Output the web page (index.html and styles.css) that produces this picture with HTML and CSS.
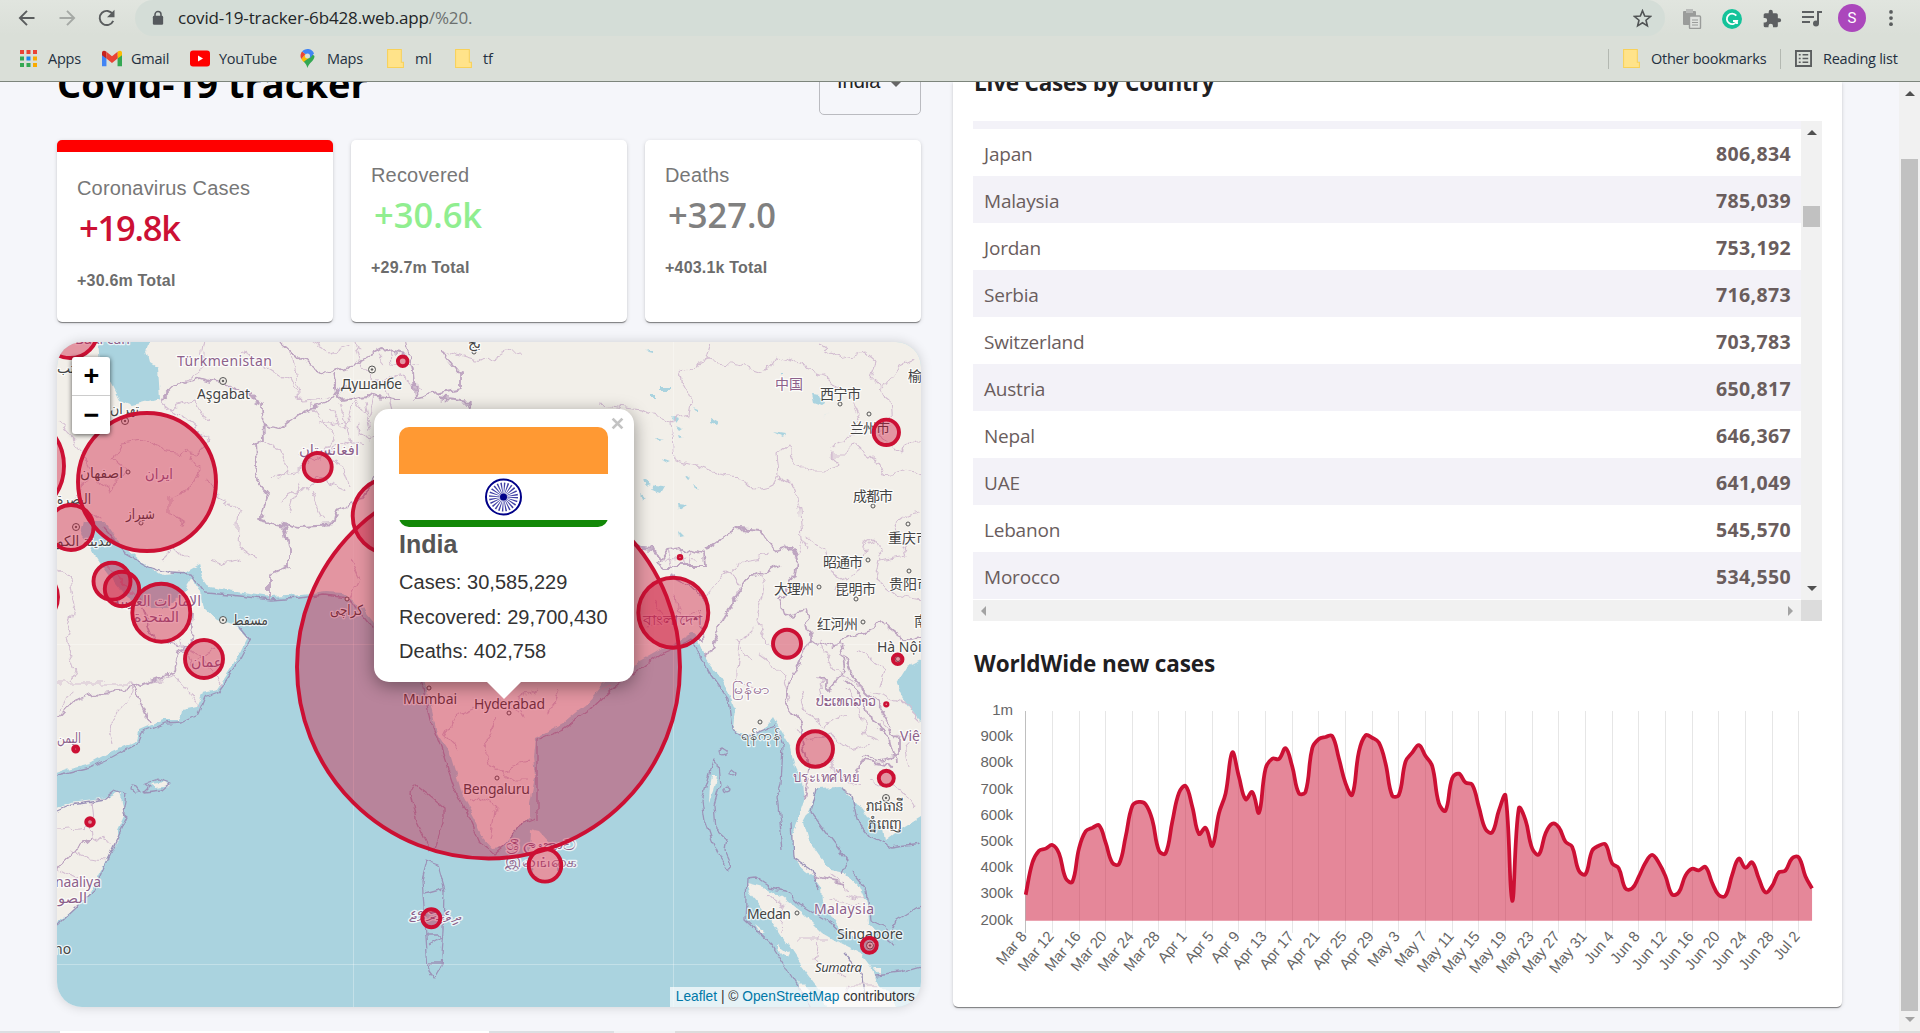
FILE: index.html
```html
<!DOCTYPE html>
<html lang="en">
<head>
<meta charset="utf-8">
<title>Covid-19 tracker</title>
<link rel="stylesheet" href="styles.css">
</head>
<body>
<header class="chrome">
  <div class="toolbar">
    <svg class="nav-icon" viewBox="0 0 24 24"><path d="M21 12H4M12 3.500 3.500 12 12 20.500"/></svg>
    <svg class="nav-icon nav-off" viewBox="0 0 24 24"><path d="M3 12h17M12 3.500 20.500 12 12 20.500"/></svg>
    <svg class="nav-icon" viewBox="0 0 24 24"><path d="M19.500 15.500A8.500 8.500 0 1 1 19 7.500"/><path class="solid" d="M21 2v9h-9z"/></svg>
    <div class="omnibox">
      <svg class="lock" viewBox="0 0 14 18"><path d="M3.500 8V5a3.500 3.500 0 0 1 7 0v3" fill="none" stroke="#55595d" stroke-width="1.800"/><rect x="1" y="6.500" width="12" height="10.500" rx="1.500" fill="#55595d"/></svg>
      <span class="url">covid-19-tracker-6b428.web.app<span class="url-path">/%20.</span></span>
      <svg class="star" viewBox="0 0 20 20"><path d="m10 1.800 2.300 5.600 6 .5-4.600 3.900 1.400 5.900-5.100-3.200-5.100 3.200 1.400-5.900L1.700 7.900l6-.5z"/></svg>
    </div>
    <div class="extensions">
      <svg viewBox="0 0 20 20"><rect x="1" y="2" width="13" height="14" rx="1" fill="#9a9c9a"/><rect x="4" y="0" width="7" height="4" fill="#b9bbb9"/><rect x="7.500" y="7" width="11" height="12.500" rx="1" fill="#dfe2de" stroke="#9a9c9a" stroke-width="1.400"/><path d="M10 11h6M10 13.500h6M10 16h6" stroke="#9a9c9a" stroke-width="1.200"/></svg>
      <svg viewBox="0 0 20 20"><circle cx="10" cy="10" r="10" fill="#15c39a"/><path d="M14.300 6.600A5.300 5.300 0 1 0 15 12h-4M15 12v3" fill="none" stroke="#fff" stroke-width="1.800"/></svg>
      <svg viewBox="0 0 24 24"><path fill="#5d6062" d="M20.500 11H19V7a2 2 0 0 0-2-2h-4V3.500a2.500 2.500 0 0 0-5 0V5H4a2 2 0 0 0-2 2v3.800h1.500a2.700 2.700 0 0 1 0 5.400H2V20a2 2 0 0 0 2 2h3.800v-1.500a2.700 2.700 0 0 1 5.400 0V22H17a2 2 0 0 0 2-2v-4h1.500a2.500 2.500 0 0 0 0-5z"/></svg>
      <svg viewBox="0 0 20 20"><path d="M0 3h12M0 8h12M0 13h8" stroke="#5d6062" stroke-width="2"/><path d="M16 14V3h4" fill="none" stroke="#5d6062" stroke-width="2"/><circle cx="14" cy="14.500" r="3" fill="#5d6062"/></svg>
    </div>
    <span class="avatar">S</span>
    <svg class="dots" viewBox="0 0 4 18"><circle cx="2" cy="2" r="2"/><circle cx="2" cy="8.500" r="2"/><circle cx="2" cy="15" r="2"/></svg>
  </div>
  <nav class="bookmarks">
    <a class="bm bm-apps"><svg viewBox="0 0 17 17"><path fill="#ea4335" d="M0 0h4v4H0zM6.500 0h4v4h-4zM13 0h4v4h-4z"/><path fill="#34a853" d="M0 6.500h4v4H0zM0 13h4v4H0zM6.500 13h4v4h-4z"/><path fill="#1a86f0" d="M6.500 6.500h4v4h-4z"/><path fill="#f9ab00" d="M13 6.500h4v4h-4zM13 13h4v4h-4z"/></svg>Apps</a>
    <a class="bm bm-gmail"><svg class="wide" viewBox="0 0 18 14"><path fill="#4285f4" d="M0 2v12h4V5z"/><path fill="#34a853" d="M14 5v9h4V2z"/><path fill="#fbbc04" d="M14 1v6l4-3V2c0-2-2-2.500-4-1z"/><path fill="#c5221f" d="M4 1v6L0 4V2c0-2 2-2.500 4-1z"/><path fill="#ea4335" d="m4 1 5 4 5-4v6l-5 4-5-4z"/></svg>Gmail</a>
    <a class="bm bm-yt"><svg class="wide" viewBox="0 0 20 16"><rect width="20" height="16" rx="3" fill="#f00"/><path fill="#fff" d="m8 5 5 3-5 3z"/></svg>YouTube</a>
    <a class="bm bm-maps"><svg viewBox="0 0 14 19"><path fill="#34a853" d="M7 19c1-5 7-7 7-12L10 4 3 12c1 2 3 3 4 7z"/><path fill="#fbbc04" d="M.8 10 5 5l4.500 3L3 13z"/><path fill="#ea4335" d="M0 7c0-2 .8-3.500 1.600-4.500L5 5 .8 10A7 7 0 0 1 0 7z"/><path fill="#4285f4" d="M1.600 2.500A7 7 0 0 1 13.500 4.500L9.500 9 5 5z"/><circle cx="7" cy="7" r="2.500" fill="#dadfd8"/></svg>Maps</a>
    <a class="bm bm-dir"><svg viewBox="0 0 16 18"><path fill="#ffe38a" stroke="#f8d159" d="M.5.5h13v12h2v5H.5z"/></svg>ml</a>
    <a class="bm"><svg viewBox="0 0 16 18"><path fill="#ffe38a" stroke="#f8d159" d="M.5.5h13v12h2v5H.5z"/></svg>tf</a>
    <span class="rule"></span>
    <a class="bm bm-other"><svg viewBox="0 0 16 18"><path fill="#ffe38a" stroke="#f8d159" d="M.5.5h13v12h2v5H.5z"/></svg>Other bookmarks</a>
    <span class="rule"></span>
    <a class="bm bm-reading"><svg viewBox="0 0 18 18"><path fill="none" stroke="#5b5e5f" stroke-width="2" d="M1 1h16v16H1z"/><path stroke="#5b5e5f" stroke-width="1.500" d="M4 5h2M8 5h6M4 9h2M8 9h6M4 13h2M8 13h6"/></svg>Reading list</a>
  </nav>
</header>

<main class="viewport">
  <div class="app">
    <section class="left">
      <div class="app-header">
        <h1>Covid-19 tracker</h1>
        <div class="select">India<span class="caret"></span></div>
      </div>
      <div class="stats">
        <article class="stat stat-active">
          <h2>Coronavirus Cases</h2><p class="new red">+19.8k</p><p class="total">+30.6m Total</p>
        </article>
        <article class="stat">
          <h2>Recovered</h2><p class="new green">+30.6k</p><p class="total">+29.7m Total</p>
        </article>
        <article class="stat">
          <h2>Deaths</h2><p class="new grey">+327.0</p><p class="total">+403.1k Total</p>
        </article>
      </div>
      <div class="map">
        <svg class="tiles" viewBox="57 342 864 665">
          <defs>
            <filter id="rough" x="-5%" y="-5%" width="110%" height="110%"><feTurbulence type="fractalNoise" baseFrequency=".07" numOctaves="3" seed="4"/><feDisplacementMap in="SourceGraphic" scale="13" xChannelSelector="R" yChannelSelector="G"/></filter>
            <filter id="coast" x="-5%" y="-5%" width="110%" height="110%"><feTurbulence type="fractalNoise" baseFrequency=".08" numOctaves="3" seed="9"/><feDisplacementMap in="SourceGraphic" scale="7" xChannelSelector="R" yChannelSelector="G"/></filter>
          </defs>
          <rect x="57" y="342" width="864" height="665" fill="#aad3df"/>
          <g filter="url(#coast)">
            <g class="land">
              <path d="M40 320H940V655L921 660 907 667 897 683 903 697 917 717 940 740V815L921 817 900 830 885 842 883 827 868 818 857 803 847 793 840 787 817 788 810 810 803 823 808 840 820 857 830 870 845 873 860 887 867 903 868 923 877 933 863 937 843 933 833 920 823 903 822 887 815 877 802 867 793 857 792 837 798 820 805 800 803 783 795 767 790 747 782 733 773 717 763 730 753 735 740 733 733 730 735 710 727 690 720 677 707 660 700 643 693 633 680 640 660 650 637 663 617 673 600 687 587 703 563 723 547 732 535 738 533 757 535 777 530 803 530 817 517 827 503 847 493 848 483 837 477 823 463 797 450 753 437 733 430 703 425 683 415 650 405 632 390 640 375 623 365 610 343 593 327 592 303 595 270 597 237 592 210 587 203 577 200 563 183 573 163 575 140 560 117 540 103 520 83 520 80 533 90 547 100 563 110 577 123 593 143 607 167 607 183 593 193 577 200 593 203 607 217 620 237 627 247 637 237 657 230 670 217 690 203 693 197 707 182 710 180 720 163 720 140 730 137 740 110 752 90 763 70 768 40 778z"/>
              <path d="M40 812 57 807 70 802 110 797 120 792 123 808 125 815 118 830 118 840 105 862 93 885 85 900 57 922 40 930z"/>
              <path d="M747 883 767 888 783 897 803 913 823 933 840 943 860 953 873 970 878 983 893 1000 905 1020H830L820 990 800 963 780 933 763 910 750 893z"/>
              <path d="M531 830 540 832 550 843 558 860 558 874 545 880 533 875 530 850z"/>
              <path d="M150 784 165 782 170 786 155 788zM712 775 716 775 713 792 709 802 710 785zM755 925l10 8-4 2zM778 945l10 8-2 4-8-8zM797 980l12 12 2 8-10-6zM873 967h7v8z"/>
            </g>
          </g>
          <g filter="url(#coast)" class="water">
            <path d="M97 335 100 360 110 380 120 400 133 405 160 398 158 367 150 362 147 350 153 335z"/>
            <path d="M811 394l9 1 4 9-3 2-8-3zM655 485l9 1-4 7-9-3zM677 503l9 1-8 5zM774 433l12 2-2 3zM660 387h10v2h-10zM652 395h4v3h-4zM671 415l9 3-4 5zM693 409l5 2v3zM711 417l9 5-2 3-8-3zM826 414l3-4-5 7zM679 529l6 6-5 1zM643 480l9 5-6 2zM693 483l2 6 4 2zM718 380l5 2zM779 373h4v2zM645 350h8v2zM656 438l7 2-4 1zM678 435l6 2-5 1zM675 425l7 3-3 2zM662 458l8 3-5 2zM684 475l7 3-3 2zM640 495l6 4-4 1z"/>
          </g>
          <g class="sea-lines" filter="url(#coast)">
            <path d="M103 527 125 553 148 566 170 573 191 574 206 593 240 596 270 600 300 598 325 595 348 598 370 625 392 648 410 645 422 683 430 720 440 745 455 790 468 815 480 842 495 853 508 842 520 824 535 818"/>
            <path d="M57 775 90 767 112 757 138 743 142 733 165 723 182 722 198 714 205 697 218 692 235 668 250 640 238 625"/>
            <path d="M57 810 70 804 105 799 115 791 126 795 123 812 128 816 119 835 106 862 94 890 57 925"/>
            <path d="M537 820 537 740 562 730 590 710 615 686 665 651 692 640 708 672 728 700 732 730 745 738 775 725 783 745 781 785 777 797 783 850M841 789 852 795 857 820 872 838 890 848 921 844M817 788 811 812 828 835 847 860 842 874 M791 822 793 857 812 870 820 890M852 872 867 890 870 920 885 927 888 940 895 945 M921 905 897 920 890 937"/>
            <path d="M747 878 745 920 772 945 800 990 812 1010M747 878 755 877 770 887 785 890 800 905 830 923 845 937"/>
            <path d="M714 760 708 780 702 800 705 820 712 840 720 858 728 870 732 865 725 850 727 840 716 830 714 805 720 785 718 765zM722 748a4 4 0 1 0 5 3zM732 770a3 3 0 1 0 4 3zM727 787a3 3 0 1 0 4 3z"/>
            <path d="M415 784 410 793 417 822 430 850 435 848 444 822 444 808zM427 861 422 880 425 920 428 970 434 978 441 966 444 930 445 890 438 865zM425 893 443 888M425 935h17M429 945l14-8M429 962h12"/>
            <path d="M131 785l-1 6 5 2 6-1-5-6zM146 783l12-4 12 4-8 7-18 2 6-6zM843 953 863 975 865 1000M875 975 900 972 921 966"/>
          </g>
          <g class="borders minor" filter="url(#rough)">
            <path d="M160 400 185 420 210 440 195 455 165 450 145 440 120 443 112 460 125 470 110 490 95 480M185 450 200 470 190 490 170 495 170 515 185 525M205 480 225 500 240 508 238 545 258 560M170 410 195 400 205 420M57 420 75 440 90 470 75 500 100 520M205 342 200 370 180 385M240 350 265 365 290 380 300 400 330 398M330 410 345 430 355 400 370 420 375 395M280 500 320 480 345 490M300 480 290 515M310 490 325 520"/>
            <path d="M290 350 295 375 300 400M355 342 362 365 380 385 400 375 420 390M385 385 392 410M325 420 335 440 320 460 300 455M310 340 330 352 350 345M365 400 370 430M240 560 225 565 210 560M160 560 175 545 190 560M57 570 70 580 75 605 65 640 76 670 70 682M57 684H133L130 700 107 725 112 745M133 688 175 675 197 705M183 640 190 665 215 650M175 640 200 655 225 690"/>
            <path d="M320 425 345 420 350 440 330 450M345 440 365 445M355 425 370 440M340 405 345 420M262 440 280 450 290 470 275 480M270 480 300 470 310 455M330 460 345 470 350 485M310 400 320 420M390 350 395 362 420 365M375 350 385 362"/>
            <path d="M440 350 480 362 520 350M675 420 640 410 600 405M711 342 706 360 680 372 685 390 690 400 688 415 672 420 675 460 695 465 720 475 745 480 755 490 775 485 780 475M706 360 735 365 765 375 775 358 800 365 825 375 835 385 850 390M820 345 840 358 865 352 875 360 870 380 880 390M880 390 900 365 915 358M877 390 890 400 892 425 875 430 900 455 915 440 921 440"/>
            <path d="M780 475 778 455 787 448 795 465 810 470 825 470 840 465 830 455 845 455 855 445 875 460 885 475 905 470 921 475M850 390 860 420 845 440 828 450M780 475 795 490 800 510 802 540 808 550M808 540 825 550 830 570 845 580 860 570 865 545 875 540 880 560 905 555M880 560 875 580 895 595 921 600M905 555 892 525 905 515 921 512M802 540 795 560M840 580 838 590"/>
            <path d="M705 600 725 575 745 560 770 555M725 570 740 585 730 610 720 620M760 570 765 590 757 620 770 650M755 625 740 640 735 680 755 690M760 655 780 670 790 700M735 640 750 660M800 690 808 715 825 725 845 715M845 690 860 710 865 735 880 740M820 680 825 700 840 700M860 650 885 670 880 685M820 640 835 670 865 690M795 730 810 740 830 735 850 750 870 745M870 690 900 700 921 720M880 720 905 740 910 765M835 755 830 770 860 785M870 780 900 790 915 810M830 875 850 890M845 895 862 900M830 900 860 905M770 895 785 905 780 930M820 935 815 960 845 975M800 940 830 940M845 1000 850 985 880 985"/>
            <path d="M455 715 480 705 500 700 520 710M455 715 445 735 460 750M495 720 485 740 490 765 500 770 530 762M480 795 495 810 490 840M480 795 470 800M535 690 520 700 525 720M500 770 515 780 530 780M560 690 550 715M610 685 600 690M350 560 360 580 350 600"/>
            <path d="M89 800 92 835 110 845M57 830 90 827M68 850 90 858 105 860M57 870 75 880M675 595 680 620 700 610M655 600 665 620 645 630M690 585 705 600M70 690 60 710"/>
            <path d="M667 550 672 568M680 548 685 567M692 552 690 567M660 558 700 560"/>
          </g>
          <g class="borders major" filter="url(#rough)">
            <path d="M160 400 175 385 200 378 225 385 245 395 262 403 263 440 255 445 257 480 270 495 260 520 285 525 290 550 290 565 270 575 270 600M262 425 280 430 305 410 335 400 345 385M280 342 300 360 330 375 352 365 380 350 405 355M335 375 340 400 365 395 400 400M405 342 412 370 415 400 435 395 460 390 460 375 440 350M260 520 300 527 335 525 338 510 355 505 375 480M437 398 470 402 475 425M57 720 75 700 90 695 133 688 175 672 180 655 190 640 192 610M133 688 150 725M100 560 140 600 155 640 182 645M57 870 75 850 92 835"/>
            <path d="M630 548 655 550 660 560M657 562 665 550 682 548 702 555 703 567 665 567zM703 552 720 540 740 528 760 530 775 550 790 545 797 560 795 575 780 600 785 615 805 610 810 640 820 648 840 640 865 632 885 625 905 640 921 635M780 565 745 580 735 600 725 615 715 640 705 660M700 610 703 640 695 640M670 575 690 585 705 600M840 640 845 670 830 690 820 680M810 640 790 680 785 700 800 720 805 745 810 770 805 800M845 680 865 700 870 720 890 735 895 760M860 755 880 760 900 755 900 740 875 700 855 680 845 655M815 877 830 882 845 885M855 775 862 760 890 765"/>
          </g>
          <path class="seams" d="M353.500 342V1007M673.500 342V1007M57 644.500H921M57 964.500H921"/>
          <g class="places">
            <circle cx="223" cy="381" r="3.500"/><circle cx="372" cy="369.500" r="3.500"/><circle cx="125" cy="421" r="3.500"/><circle cx="76" cy="527" r="3.500"/><circle cx="223" cy="620" r="3.500"/><circle cx="886" cy="798" r="3.500"/><circle cx="870" cy="945.500" r="3.500"/>
            <circle class="dot" cx="223" cy="381" r=".8"/><circle class="dot" cx="372" cy="369.500" r=".8"/><circle class="dot" cx="125" cy="421" r=".8"/><circle class="dot" cx="76" cy="527" r=".8"/><circle class="dot" cx="223" cy="620" r=".8"/><circle class="dot" cx="886" cy="798" r=".8"/><circle class="dot" cx="870" cy="945.500" r=".8"/>
            <circle cx="128" cy="472" r="2"/><circle cx="141" cy="523" r="2"/><circle cx="347" cy="599" r="2"/><circle cx="429" cy="688" r="2"/><circle cx="509" cy="713" r="2"/><circle cx="497" cy="778" r="2"/><circle cx="760" cy="722" r="2"/><circle cx="797" cy="913" r="2"/><circle cx="840" cy="404" r="2"/><circle cx="869" cy="414" r="2"/><circle cx="873" cy="506" r="2"/><circle cx="908" cy="524" r="2"/><circle cx="868" cy="560" r="2"/><circle cx="909" cy="571" r="2"/><circle cx="819" cy="587" r="2"/><circle cx="856" cy="599" r="2"/><circle cx="863" cy="622" r="2"/><circle cx="898" cy="659" r="2.500"/><circle cx="474" cy="352" r="2"/>
          </g>
          <g class="names">
            <text class="ctry" x="177" y="366" textLength="95">Türkmenistan</text>
            <text x="197" y="399" textLength="53">Aşgabat</text>
            <text x="341" y="389" textLength="61">Душанбе</text>
            <text x="110" y="414" textLength="29" lengthAdjust="spacingAndGlyphs">تهران</text>
            <text x="57" y="373">تب</text>
            <text class="ctry" x="75" y="344">Bakı can</text>
            <text x="80" y="478" textLength="43" lengthAdjust="spacingAndGlyphs">اصفهان</text>
            <text class="ctry" x="145" y="479" textLength="28" lengthAdjust="spacingAndGlyphs">ایران</text>
            <text x="126" y="519" textLength="29" lengthAdjust="spacingAndGlyphs">شیراز</text>
            <text x="57" y="504" textLength="34" lengthAdjust="spacingAndGlyphs">البصرة</text>
            <text x="57" y="546" textLength="55" lengthAdjust="spacingAndGlyphs">مدينة الكو</text>
            <text class="ctry" x="299" y="455" textLength="60" lengthAdjust="spacingAndGlyphs">افغانستان</text>
            <text class="ctry" x="113" y="606" textLength="88" lengthAdjust="spacingAndGlyphs">الإمارات العربية</text>
            <text class="ctry" x="134" y="622" textLength="45" lengthAdjust="spacingAndGlyphs">المتحدة</text>
            <text x="232" y="625" textLength="36" lengthAdjust="spacingAndGlyphs">مسقط</text>
            <text class="ctry" x="191" y="667" textLength="31" lengthAdjust="spacingAndGlyphs">عمان</text>
            <text x="330" y="615" textLength="33" lengthAdjust="spacingAndGlyphs">کراچی</text>
            <text class="ctry" x="57" y="743" textLength="24" lengthAdjust="spacingAndGlyphs">اليمن</text>
            <text class="ctry" x="55" y="887" textLength="46">naaliya</text>
            <text class="ctry" x="58" y="903" textLength="29" lengthAdjust="spacingAndGlyphs">الصو</text>
            <text x="54" y="954">no</text>
            <text x="403" y="704" textLength="54">Mumbai</text>
            <text x="474" y="709" textLength="71">Hyderabad</text>
            <text x="463" y="794" textLength="67">Bengaluru</text>
            <text class="ctry" x="506" y="850" textLength="70" lengthAdjust="spacingAndGlyphs">ශ්‍රී ලංකාව</text>
            <text class="ctry" x="505" y="867" textLength="72" lengthAdjust="spacingAndGlyphs">இலங்கை</text>
            <text class="ctry" x="409" y="922" textLength="51" lengthAdjust="spacingAndGlyphs">ދިވެހިރާއްޖެ</text>
            <text class="ctry" x="643" y="625" textLength="59" lengthAdjust="spacingAndGlyphs">বাংলাদেশ</text>
            <text class="ctry" x="732" y="694" textLength="38" lengthAdjust="spacingAndGlyphs">မြန်မာ</text>
            <text x="741" y="740" textLength="40" lengthAdjust="spacingAndGlyphs">ရန်ကုန်</text>
            <text class="ctry" x="816" y="706" textLength="60" lengthAdjust="spacingAndGlyphs">ປະເທດລາວ</text>
            <text class="ctry" x="793" y="782" textLength="66" lengthAdjust="spacingAndGlyphs">ประเทศไทย</text>
            <text class="ctry" x="900" y="741">Việt</text>
            <text x="866" y="811" textLength="38" lengthAdjust="spacingAndGlyphs">រាជធានី</text>
            <text x="868" y="829" textLength="34" lengthAdjust="spacingAndGlyphs">ភ្នំពេញ</text>
            <text class="ctry" x="814" y="914" textLength="60">Malaysia</text>
            <text x="747" y="919" textLength="44">Medan</text>
            <text x="837" y="939" textLength="66">Singapore</text>
            <text class="isl" x="815" y="972" textLength="47">Sumatra</text>
            <text class="ctry" x="775" y="389">中国</text>
            <text x="820" y="399" textLength="41">西宁市</text>
            <text x="850" y="433" textLength="40">兰州市</text>
            <text x="853" y="501" textLength="40">成都市</text>
            <text x="888" y="543">重庆市</text>
            <text x="823" y="567" textLength="40">昭通市</text>
            <text x="774" y="594" textLength="40">大理州</text>
            <text x="835" y="594" textLength="41">昆明市</text>
            <text x="889" y="589">贵阳市</text>
            <text x="817" y="629" textLength="41">红河州</text>
            <text x="914" y="626">南宁</text>
            <text x="908" y="381">榆林</text>
            <text x="877" y="652">Hà Nội</text>
            <text x="468" y="348">بج</text>
          </g>
          <g class="rings">
            <circle cx="488.500" cy="667" r="191.500"/><circle cx="147" cy="482" r="69"/><circle cx="317.700" cy="467" r="14"/><circle cx="402.700" cy="361.300" r="4.800"/><circle cx="390.700" cy="516" r="38"/><circle cx="71" cy="527.500" r="22.500"/><circle cx="12" cy="466" r="52"/><circle cx="70" cy="330" r="28"/><circle cx="112" cy="581.300" r="18.500"/><circle cx="122" cy="589" r="17.200"/><circle cx="161.300" cy="612.700" r="29"/><circle cx="204" cy="659" r="19"/><circle cx="32" cy="597" r="26"/><circle cx="75.700" cy="749" r="2.500"/><circle cx="90" cy="822" r="3.800"/><circle cx="431.300" cy="918.300" r="9"/><circle cx="545" cy="865.300" r="16.300"/><circle cx="815.300" cy="749" r="17.700"/><circle cx="886.300" cy="778.300" r="7.500"/><circle cx="886.300" cy="704.300" r="1.200"/><circle cx="869.300" cy="945.300" r="7.500"/><circle cx="673.300" cy="612.700" r="35"/><circle cx="680" cy="557.300" r="1.300"/><circle cx="787" cy="643.700" r="14"/><circle cx="886.300" cy="432.300" r="12.700"/><circle cx="897.700" cy="659.300" r="4.800"/>
          </g>
        </svg>
        <div class="zoom"><span>+</span><span>−</span></div>
        <div class="popup">
          <svg class="flag" viewBox="0 0 209 100"><path fill="#f93" d="M0 0h209v47H0z"/><path fill="#fff" d="M0 47h209v46H0z"/><path fill="#128807" d="M0 93h209v7H0z"/><circle cx="104.500" cy="70" r="17.500" fill="none" stroke="#008" stroke-width="2"/><circle cx="104.500" cy="70" r="8" fill="none" stroke="#008" stroke-width="13" stroke-dasharray=".9 1.194" opacity=".75"/><circle cx="104.500" cy="70" r="3.500" fill="#008"/></svg>
          <h3>India</h3>
          <p>Cases: 30,585,229</p><p>Recovered: 29,700,430</p><p>Deaths: 402,758</p>
          <svg class="close" viewBox="0 0 12 12"><path d="m1.500 1.500 9 9m0-9-9 9"/></svg>
          <svg class="tip" viewBox="0 0 36 18"><path fill="#fff" d="M0 0h36L18 18z"/></svg>
        </div>
        <div class="credit"><a>Leaflet</a> | © <a>OpenStreetMap</a> contributors</div>
      </div>
    </section>
    <aside class="right">
      <h2 class="panel-title live">Live Cases by Country</h2>
      <div class="table-box">
        <div class="rows">
          <div class="row row-cut"></div>
          <div class="row"><span>Japan</span><b>806,834</b></div>
          <div class="row"><span>Malaysia</span><b>785,039</b></div>
          <div class="row"><span>Jordan</span><b>753,192</b></div>
          <div class="row"><span>Serbia</span><b>716,873</b></div>
          <div class="row"><span>Switzerland</span><b>703,783</b></div>
          <div class="row"><span>Austria</span><b>650,817</b></div>
          <div class="row"><span>Nepal</span><b>646,367</b></div>
          <div class="row"><span>UAE</span><b>641,049</b></div>
          <div class="row"><span>Lebanon</span><b>545,570</b></div>
          <div class="row"><span>Morocco</span><b>534,550</b></div>
        </div>
        <div class="vbar"><i class="up"></i><i class="thumb"></i><i class="down"></i></div>
        <div class="hbar"><i class="prev"></i><i class="next"></i></div>
        <div class="corner"></div>
      </div>
      <h2 class="panel-title">WorldWide new cases</h2>
      <svg id="chart" class="chart" viewBox="973 695 850 290"></svg>
    </aside>
  </div>
  <div class="page-bar"><i class="up"></i><i class="thumb"></i><i class="down off"></i></div>
</main>
<footer class="edge"></footer>
<script src="chart.js"></script>
</body>
</html>
```
FILE: styles.css
```css
* { box-sizing: border-box; }
body { margin: 0; width: 1920px; height: 1033px; overflow: hidden; display: flex; flex-direction: column; background: #f5f6fa; font-family: "Open Sans", "Noto Sans", sans-serif; }
h1, h2, h3, p { margin: 0; }

.chrome { height: 82px; flex: none; background: linear-gradient(#e1e5df, #dadfd8 35px); border-bottom: 1px solid #7d857c; }
.toolbar { height: 37px; display: flex; align-items: flex-start; padding-left: 17px; }
.nav-icon { width: 20px; height: 20px; margin: 8px 20px 0 0; fill: none; stroke: #5a5d5e; stroke-width: 2.3; }
.nav-icon .solid { fill: #5a5d5e; stroke: none; }
.nav-off { stroke: #a5a9a5; }
.omnibox { width: 1530px; height: 36px; margin-left: -2px; padding: 0 13px 0 17px; border-radius: 18px; background: #d4ddd7; display: flex; align-items: center; }
.lock { width: 12px; height: 16px; margin-right: 14px; }
.url { flex: 1; font-size: 17px; line-height: 24px; letter-spacing: -.14px; color: #222527; }
.url-path { color: #6c706f; }
.star { width: 19px; height: 19px; fill: none; stroke: #515455; stroke-width: 1.7; }
.extensions { display: flex; gap: 20px; margin: 9px 0 0 17px; }
.extensions svg { width: 20px; height: 20px; }
.avatar { width: 28px; height: 28px; margin: 4px 0 0 16px; border-radius: 50%; background: #ab47bc; color: #fff; font: 15px/28px Roboto, sans-serif; text-align: center; }
.dots { width: 4px; height: 17px; margin: 10px 0 0 23px; fill: #5a5d5e; }
.bookmarks { height: 43px; display: flex; align-items: center; padding-left: 20px; font-size: 14.5px; color: #24303f; }
.bm { display: flex; align-items: center; white-space: nowrap; letter-spacing: -.25px; }
.bm svg { width: 17px; height: 19px; margin-right: 11px; flex: none; }
.bm .wide { width: 20px; margin-right: 9px; }
.bm-apps { width: 82px; }
.bm-gmail { width: 88px; }
.bm-yt { width: 109px; }
.bm-maps { width: 88px; }
.bm-dir { width: 68px; }
.rule { width: 1px; height: 20px; background: #b3b8b1; margin: 0 14px 0 auto; }
.bm-other { width: 157px; }
.bm-other + .rule { margin-left: 0; }
.bm-reading { width: 125px; }

.viewport { flex: 1; min-height: 0; display: flex; overflow: hidden; }
.app { flex: 1; min-width: 0; display: flex; padding: 0 57px 24px; justify-content: space-between; }
.left { width: 864px; display: flex; flex-direction: column; }
.app-header { height: 33px; display: flex; justify-content: space-between; align-items: flex-end; }
h1 { font-size: 38px; line-height: 50px; letter-spacing: .05px; margin-bottom: 7px; white-space: nowrap; }
.select { width: 102px; height: 70px; border: 1px solid #babbc0; border-radius: 5px; padding: 23px 0 0 17px; font: 20px/24px "Liberation Sans", sans-serif; color: #222; display: flex; gap: 10px; }
.caret { border: 6px solid transparent; border-top-color: #666; height: 0; margin-top: 12px; }
.stats { margin-top: 25px; display: flex; justify-content: space-between; }
.stat { width: 276px; height: 182px; padding: 22px 20px; background: #fff; border-radius: 5px; box-shadow: 0 2px 1px -1px rgba(0,0,0,.3), 0 1px 1px rgba(0,0,0,.2), 0 1px 4px rgba(0,0,0,.14); }
.stat-active { border-top: 12px solid #f00; padding-top: 23px; }
.stat h2 { font: 20px/26px "Liberation Sans", sans-serif; color: #777; letter-spacing: .18px; }
.new { font-size: 34.5px; line-height: 44px; font-weight: 600; margin: 5px 0 0 3px; letter-spacing: 0; }
.red { color: #cc1034; letter-spacing: -1.2px; margin-left: 2px; }
.green { color: #90ee90; }
.grey { color: #808080; }
.total { font: bold 16px/20px "Liberation Sans", sans-serif; color: #6c6c6c; margin-top: 21px; letter-spacing: .2px; }
.stat-active .total { margin-top: 21px; }

.map { position: relative; margin-top: 20px; height: 665px; border-radius: 25px; overflow: hidden; box-shadow: 0 0 12px rgba(0,0,0,.16); }
.tiles { display: block; width: 864px; height: 665px; }
.land { fill: #f2efe9; }
.water { fill: #aad3df; }
.borders, .sea-lines { fill: none; stroke-linejoin: round; }
.sea-lines { stroke: #9c93b8; stroke-width: 1.3; }
.minor { stroke: #d3bdd1; stroke-width: 1.1; }
.major { stroke: #bda4c0; stroke-width: 1.8; }
.seams { stroke: #fff; stroke-opacity: .3; }
.places { fill: #f2efe9; stroke: #555; stroke-width: 1; }
.places .dot { fill: #555; }
.names { font: 14px "Noto Sans", "Noto Sans CJK SC", "DejaVu Sans", sans-serif; fill: #444; stroke: #fff; stroke-opacity: .75; stroke-width: 2.5px; paint-order: stroke; stroke-linejoin: round; }
.names .ctry { fill: #8d618b; }
.names .isl { font-style: italic; font-size: 13px; }
.rings { fill: #cc1034; fill-opacity: .4; stroke: #cc1034; stroke-width: 3.9; }
.zoom { position: absolute; left: 15px; top: 15px; width: 38px; height: 77px; border-radius: 3px; background: #fff; box-shadow: 0 1px 5px rgba(0,0,0,.65); }
.zoom span { display: block; height: 38px; font: bold 27px/38px "Liberation Sans", sans-serif; text-align: center; padding-left: 1px; }
.zoom span + span { border-top: 1px solid #ccc; }
.popup { position: absolute; left: 317px; top: 67px; width: 260px; height: 273px; padding: 18px 25px 0; background: #fff; border-radius: 15px; box-shadow: 0 4px 18px rgba(0,0,0,.4); font: 20px/34.5px "Liberation Sans", sans-serif; color: #333; white-space: nowrap; }
.flag { display: block; width: 209px; height: 100px; border-radius: 10px; }
.popup h3 { font-size: 25px; line-height: 34px; color: #555; height: 38px; }
.popup p { letter-spacing: .03px; }
.close { position: absolute; right: 10px; top: 8px; width: 13px; height: 13px; stroke: #c3c3c3; stroke-width: 2.6; }
.tip { position: absolute; left: 112px; top: 272px; width: 36px; height: 18px; }
.credit { position: absolute; right: 0; bottom: 0; height: 20px; padding: 0 6px; background: rgba(255,255,255,.7); font: 13.75px/19px "Liberation Sans", sans-serif; color: #333; white-space: nowrap; }
.credit a { color: #0078a8; }

.right { width: 889px; height: 925px; padding: 0 20px; background: #fff; border-radius: 0 0 5px 5px; box-shadow: 0 2px 1px -1px rgba(0,0,0,.3), 0 1px 1px rgba(0,0,0,.2), 0 1px 4px rgba(0,0,0,.14); }
.panel-title { font-size: 22.5px; line-height: 32px; height: 30px; font-weight: 700; color: #1f2022; letter-spacing: -.1px; white-space: nowrap; padding-left: 1px; }
.panel-title.live { margin-top: -15px; height: 54px; letter-spacing: -.2px; }
.table-box { width: 849px; height: 500px; display: grid; grid-template: 479px 21px / 828px 21px; margin-bottom: 27px; }
.row { height: 47px; display: flex; justify-content: space-between; align-items: center; padding: 2px 10px 0 11px; font-size: 19px; color: #6a5d5d; }
.row:nth-child(odd) { background: #f3f2f8; }
.row-cut { height: 8px; }
.row span { letter-spacing: -.2px; }
.row b { font-size: 19.5px; letter-spacing: .35px; }
.vbar, .page-bar { background: #f1f1f1; display: flex; flex-direction: column; align-items: center; width: 21px; }
i { display: block; flex: none; }
.up { border: 5px solid transparent; border-top: 0; border-bottom-color: #505050; margin-top: 9px; }
.down { border: 5px solid transparent; border-bottom: 0; border-top-color: #505050; margin-top: auto; margin-bottom: 9px; }
.thumb { width: 17px; background: #c1c1c1; }
.vbar .thumb { height: 21px; margin-top: 71px; }
.page-bar { flex: none; }
.page-bar .thumb { height: 852px; margin-top: 63px; }
.off { border-top-color: #a3a3a3; }
.hbar { background: #f1f1f1; display: flex; justify-content: space-between; align-items: center; padding: 0 8px; }
.prev, .next { border: 5px solid transparent; }
.prev { border-left: 0; border-right-color: #a3a3a3; }
.next { border-right: 0; border-left-color: #a3a3a3; }
.corner { background: #dcdcdc; }
.chart { display: block; width: 850px; height: 290px; margin-top: 17px; }
.chart text { font: 15px "Liberation Sans", sans-serif; fill: #666; text-anchor: end; }
.grid { stroke: #e6e6e6; stroke-width: 1; }
.grid-first { stroke: #bfbfbf; }
.area { fill: #cc1034; fill-opacity: .5; }
.curve { fill: none; stroke: #cc1034; stroke-width: 3.75; }
.edge { height: 2px; flex: none; background: linear-gradient(90deg, #dcdfe2 60px, #fff 60px, #fff 489px, #dcdfe2 489px, #dcdfe2 614px, #f0f2f4 614px, #f0f2f4 675px, #dcdcdc 675px); }
```
FILE: chart.js
```js
// Daily new cases worldwide, in thousands, from 8 March to 4 July.
const daily = [
  299,421,467,475,489,457,362,348,476,541,554,564,498,421,416,521,638,653,644,584,
  467,457,578,688,714,635,531,554,485,610,686,842,749,663,691,612,781,818,817,858,
  788,686,692,858,893,901,905,819,724,680,845,907,898,879,800,677,680,807,841,870,
  828,790,648,620,743,761,727,719,635,549,537,620,677,276,629,584,476,453,533,570,
  556,501,482,391,377,467,486,491,419,400,323,323,368,421,451,421,370,300,308,372,
  398,392,405,345,298,295,374,437,402,423,362,308,332,384,391,438,442,370,323
];
const left = 1025.7, step = 6.664, top_ = 711, bottom = 920.7;
const yOf = v => bottom - (v - 200) * (bottom - top_) / 800;
const pts = daily.map((v, i) => ({ x: left + i * step, y: yOf(v) }));

// Control points follow the neighbouring points with a tension of 0.4.
const ctrl = pts.map((p, i) => {
  const a = pts[i - 1] || p, b = pts[i + 1] || p;
  const da = Math.hypot(p.x - a.x, p.y - a.y), db = Math.hypot(b.x - p.x, b.y - p.y);
  const fa = 0.4 * da / (da + db), fb = 0.4 * db / (da + db);
  return { px: p.x - fa * (b.x - a.x), py: p.y - fa * (b.y - a.y), nx: p.x + fb * (b.x - a.x), ny: p.y + fb * (b.y - a.y) };
});
let d = `M${pts[0].x} ${pts[0].y}`;
for (let i = 1; i < pts.length; i++) {
  d += `C${ctrl[i - 1].nx} ${ctrl[i - 1].ny} ${ctrl[i].px} ${ctrl[i].py} ${pts[i].x} ${pts[i].y}`;
}

const months = ["Mar", "Apr", "May", "Jun", "Jul"];
let out = "";
for (let i = 0; i < daily.length; i += 4) {
  const x = Math.round(left + i * step - 0.5) + 0.5;
  const date = new Date(2021, 2, 8 + i);
  out += `<path class="grid${i ? "" : " grid-first"}" d="M${x} ${top_}V933"/>`;
  out += `<text transform="translate(${x - 1} 934) rotate(-50)" y="4">${months[date.getMonth() - 2]} ${date.getDate()}</text>`;
}
for (let v = 200; v <= 1000; v += 100) {
  out += `<text x="1013" y="${yOf(v) + 4}">${v === 1000 ? "1m" : v + "k"}</text>`;
}
out += `<path class="area" d="${d}V${bottom}H${left}Z"/><path class="curve" d="${d}"/>`;
document.getElementById("chart").innerHTML = out;
```
